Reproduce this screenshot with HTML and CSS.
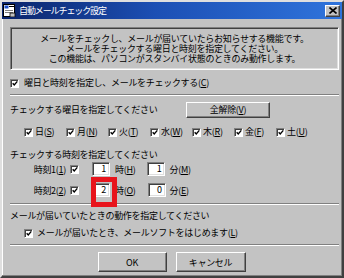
FILE: index.html
```html
<!DOCTYPE html>
<html lang="ja">
<head>
    <meta charset="UTF-8">
    <meta name="viewport" content="width=device-width, initial-scale=1.0">
    <title>自動メールチェック設定</title>
    <link rel="stylesheet" href="styles.css">
</head>
<body>
    <div class="window">
        <div class="titlebar">
            <svg class="app-icon" width="13" height="13" viewBox="0 0 13 13">
                <rect x="0.5" y="0.5" width="11" height="12" fill="#ffffff" stroke="#000000"/>
                <rect x="1.5" y="1.5" width="4" height="3" fill="#1c4fc8"/>
                <rect x="6" y="2" width="5" height="1" fill="#000000"/>
                <rect x="2" y="6" width="8" height="1" fill="#808080"/>
                <rect x="2" y="8" width="8" height="1" fill="#808080"/>
                <rect x="7" y="9" width="5" height="4" fill="#c0c0c0" stroke="#000000" stroke-width="0.8"/>
            </svg>
            <span class="title">自動メールチェック設定</span>
            <span class="close-btn">
                <svg width="8" height="7" viewBox="0 0 8 7">
                    <path d="M0.5 0.5 L7.5 6.5 M7.5 0.5 L0.5 6.5" stroke="#000000" stroke-width="1.6"/>
                </svg>
            </span>
        </div>

        <div class="content">
            <div class="info">
                <p>メールをチェックし、メールが届いていたらお知らせする機能です。</p>
                <p>メールをチェックする曜日と時刻を指定してください。</p>
                <p>この機能は、パソコンがスタンバイ状態のときのみ動作します。</p>
            </div>

            <div class="check main-check">
                <span class="box"><svg width="7" height="7" viewBox="0 0 7 7"><path d="M0.8 3.2 L2.6 5.2 L6.2 1" stroke="#000" stroke-width="1.6" fill="none"/></svg></span>
                <span>曜日と時刻を指定し、メールをチェックする(<u>C</u>)</span>
            </div>

            <div class="sep"></div>

            <div class="day-head">
                <span>チェックする曜日を指定してください</span>
                <span class="btn clear-btn">全解除(<u>V</u>)</span>
            </div>

            <div class="days">
                <div class="check day"><span class="box"><svg width="7" height="7" viewBox="0 0 7 7"><path d="M0.8 3.2 L2.6 5.2 L6.2 1" stroke="#000" stroke-width="1.6" fill="none"/></svg></span><span>日(<u>S</u>)</span></div>
                <div class="check day"><span class="box"><svg width="7" height="7" viewBox="0 0 7 7"><path d="M0.8 3.2 L2.6 5.2 L6.2 1" stroke="#000" stroke-width="1.6" fill="none"/></svg></span><span>月(<u>N</u>)</span></div>
                <div class="check day"><span class="box"><svg width="7" height="7" viewBox="0 0 7 7"><path d="M0.8 3.2 L2.6 5.2 L6.2 1" stroke="#000" stroke-width="1.6" fill="none"/></svg></span><span>火(<u>T</u>)</span></div>
                <div class="check day"><span class="box"><svg width="7" height="7" viewBox="0 0 7 7"><path d="M0.8 3.2 L2.6 5.2 L6.2 1" stroke="#000" stroke-width="1.6" fill="none"/></svg></span><span>水(<u>W</u>)</span></div>
                <div class="check day"><span class="box"><svg width="7" height="7" viewBox="0 0 7 7"><path d="M0.8 3.2 L2.6 5.2 L6.2 1" stroke="#000" stroke-width="1.6" fill="none"/></svg></span><span>木(<u>R</u>)</span></div>
                <div class="check day"><span class="box"><svg width="7" height="7" viewBox="0 0 7 7"><path d="M0.8 3.2 L2.6 5.2 L6.2 1" stroke="#000" stroke-width="1.6" fill="none"/></svg></span><span>金(<u>F</u>)</span></div>
                <div class="check day"><span class="box"><svg width="7" height="7" viewBox="0 0 7 7"><path d="M0.8 3.2 L2.6 5.2 L6.2 1" stroke="#000" stroke-width="1.6" fill="none"/></svg></span><span>土(<u>U</u>)</span></div>
            </div>

            <div class="group-label time-label">チェックする時刻を指定してください</div>

            <div class="time-row row-1">
                <span class="time-name">時刻1(<u>1</u>)</span>
                <span class="box"><svg width="7" height="7" viewBox="0 0 7 7"><path d="M0.8 3.2 L2.6 5.2 L6.2 1" stroke="#000" stroke-width="1.6" fill="none"/></svg></span>
                <span class="field hour">1</span>
                <span class="unit">時(<u>H</u>)</span>
                <span class="field minute">1</span>
                <span class="unit">分(<u>M</u>)</span>
            </div>

            <div class="time-row row-2">
                <span class="time-name">時刻2(<u>2</u>)</span>
                <span class="box"><svg width="7" height="7" viewBox="0 0 7 7"><path d="M0.8 3.2 L2.6 5.2 L6.2 1" stroke="#000" stroke-width="1.6" fill="none"/></svg></span>
                <span class="field hour">2<span class="highlight"></span></span>
                <span class="unit">時(<u>O</u>)</span>
                <span class="field minute">0</span>
                <span class="unit">分(<u>E</u>)</span>
            </div>

            <div class="sep sep-time"></div>

            <div class="group-label action-label">メールが届いていたときの動作を指定してください</div>

            <div class="check launch-check">
                <span class="box"><svg width="7" height="7" viewBox="0 0 7 7"><path d="M0.8 3.2 L2.6 5.2 L6.2 1" stroke="#000" stroke-width="1.6" fill="none"/></svg></span>
                <span>メールが届いたとき、メールソフトをはじめます(<u>L</u>)</span>
            </div>

            <div class="sep sep-bottom"></div>

            <div class="actions">
                <span class="btn ok-btn">OK</span>
                <span class="btn cancel-btn">キャンセル</span>
            </div>
        </div>
    </div>
</body>
</html>
```

FILE: styles.css
```css
body {
    margin: 0;
    width: 344px;
    height: 278px;
    overflow: hidden;
    background-color: #c3c3c3;
    font-family: "Noto Sans CJK JP", "Noto Sans", sans-serif;
    font-size: 9px;
    letter-spacing: -0.3px;
    color: #000000;
}

.window {
    box-sizing: border-box;
    width: 344px;
    height: 278px;
    background-color: #c3c3c3;
    border: 2px solid;
    border-color: #dfdfdf #404040 #404040 #dfdfdf;
    box-shadow: inset -1px -1px #808080, inset 1px 1px #ffffff;
}

/* Title bar */
.titlebar {
    height: 17px;
    display: flex;
    align-items: center;
    padding: 0 2px 0 1px;
    background: linear-gradient(to right, #0a246a 0%, #1c4fb4 45%, #2f74dc 100%);
}

.app-icon {
    flex: none;
    margin-right: 3px;
}

.title {
    flex: 1;
    color: #ffffff;
    font-size: 9px;
    letter-spacing: -1.1px;
    line-height: 17px;
}

.close-btn {
    box-sizing: border-box;
    width: 15px;
    height: 12px;
    display: flex;
    align-items: center;
    justify-content: center;
    background-color: #c3c3c3;
    border: 1px solid;
    border-color: #ffffff #404040 #404040 #ffffff;
    box-shadow: inset -1px -1px #808080;
}

/* Body */
.content {
    padding: 0 3px 0 8px;
}

.info {
    margin-top: 8px;
    height: 43px;
    box-sizing: border-box;
    padding-top: 6px;
    border: 1px solid;
    border-color: #808080 #ffffff #ffffff #808080;
    box-shadow: inset 1px 1px #404040, inset -1px -1px #dfdfdf;
    text-align: center;
}

.info p {
    margin: 0;
    line-height: 10px;
}

.check {
    display: flex;
    align-items: center;
    line-height: 12px;
}

.box {
    box-sizing: border-box;
    flex: none;
    width: 9px;
    height: 9px;
    display: flex;
    align-items: center;
    justify-content: center;
    background-color: #ffffff;
    border: 1px solid;
    border-color: #808080 #ffffff #ffffff #808080;
    box-shadow: inset 1px 1px #404040;
}

.box svg {
    margin: 1px 0 0 1px;
}

.main-check {
    margin-top: 7px;
    gap: 5px;
}

.sep {
    margin-top: 5px;
    height: 0;
    border-top: 1px solid #808080;
    border-bottom: 1px solid #ffffff;
}

.day-head {
    margin-top: 6px;
    display: flex;
    align-items: center;
    line-height: 12px;
}

.btn {
    box-sizing: border-box;
    display: flex;
    align-items: center;
    justify-content: center;
    background-color: #c3c3c3;
    border: 1px solid;
    border-color: #ffffff #404040 #404040 #ffffff;
    box-shadow: inset -1px -1px #808080;
}

.clear-btn {
    margin-left: auto;
    margin-right: 69px;
    width: 84px;
    height: 16px;
}

.days {
    margin-top: 8px;
    padding-left: 14px;
    display: flex;
}

.day {
    width: 42px;
    gap: 2px;
}

.group-label {
    line-height: 12px;
}

.time-label {
    margin-top: 11px;
}

.time-row {
    display: flex;
    align-items: center;
    height: 14px;
}

.row-1 {
    margin-top: 1px;
}

.row-2 {
    margin-top: 7px;
}

.time-name {
    width: 56px;
    text-align: right;
}

.time-row .box {
    margin-left: 4px;
}

.field {
    box-sizing: border-box;
    position: relative;
    width: 18px;
    height: 14px;
    padding-right: 3px;
    text-align: right;
    line-height: 12px;
    background-color: #ffffff;
    border: 1px solid;
    border-color: #808080 #ffffff #ffffff #808080;
    box-shadow: inset 1px 1px #404040, inset -1px -1px #dfdfdf;
}

.hour {
    margin-left: 13px;
}

.minute {
    margin-left: 12px;
}

.unit {
    margin-left: 5px;
}

.minute + .unit {
    margin-left: 4px;
}

/* red marker drawn over the hour field */
.highlight {
    position: absolute;
    left: -2px;
    top: -7px;
    width: 26px;
    height: 30px;
    box-sizing: border-box;
    border: 5px solid #e8141c;
}

.sep-time {
    margin-top: 6px;
}

.action-label {
    margin-top: 5px;
}

.launch-check {
    margin-top: 5px;
    padding-left: 14px;
    gap: 4px;
}

.sep-bottom {
    margin-top: 5px;
}

.actions {
    margin-top: 6px;
    display: flex;
    justify-content: center;
    gap: 9px;
    padding-right: 6px;
}

.ok-btn {
    width: 69px;
    height: 20px;
}

.cancel-btn {
    width: 70px;
    height: 20px;
}
```
